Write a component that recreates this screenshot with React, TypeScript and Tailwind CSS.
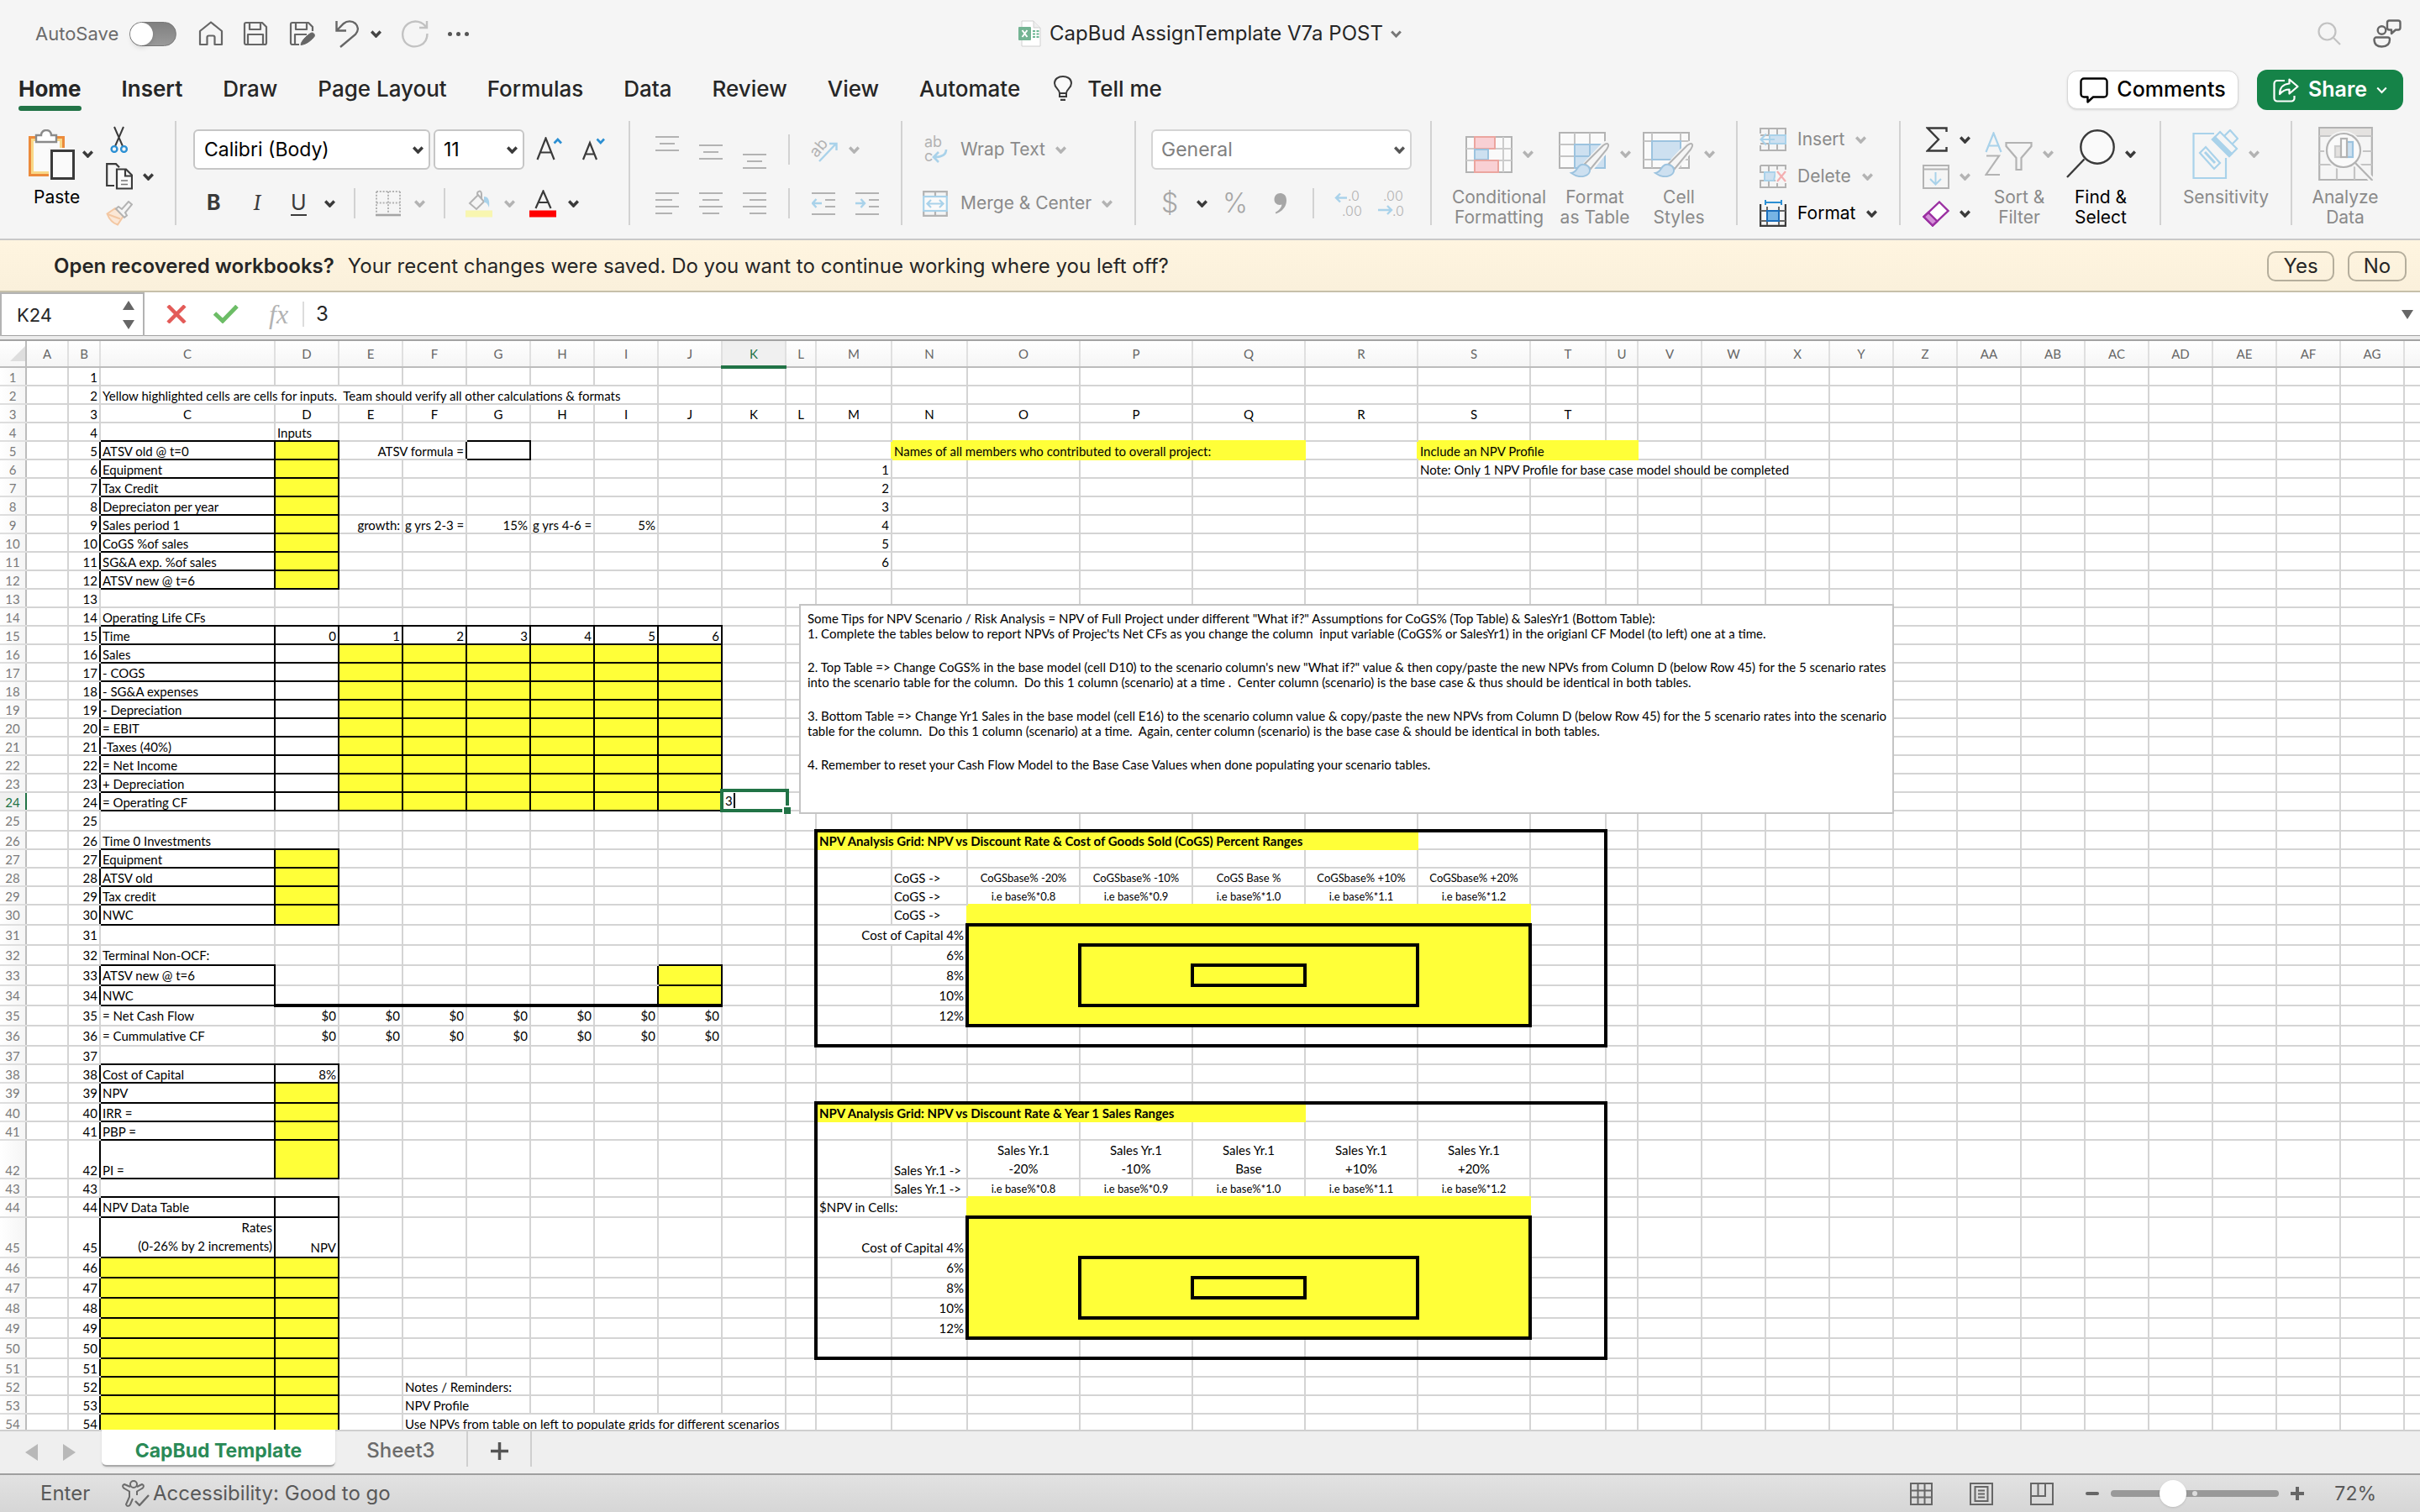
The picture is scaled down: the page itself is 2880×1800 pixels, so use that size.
import React, { useState } from "react";

const DARK = "#3a3a3a";
const DIM = "#b3b3b3";
const BLUE = "#a9d2ea";

// ---------- small icons ----------

const Chevron = ({ color = DARK, w = 3.5 }: { color?: string; w?: number }) => (
  <svg width="13" height="9" viewBox="0 0 13 9" fill="none" stroke={color} strokeWidth={w} className="shrink-0">
    <path d="M1.2 1.5 6.5 7l5.3-5.5" />
  </svg>
);

const HomeIcon = () => (
  <svg width="30" height="30" viewBox="0 0 30 30" fill="none" stroke="#666" strokeWidth="2.2" strokeLinejoin="round">
    <path d="M2 12 15 1.5 28 12v16h-8.500V19.500a2 2 0 0 0-2-2h-5a2 2 0 0 0-2 2V28H2z" />
  </svg>
);

const SaveIcon = ({ pen }: { pen?: boolean }) => (
  <svg width="32" height="30" viewBox="0 0 32 30" fill="none" stroke="#666" strokeWidth="2.2" strokeLinejoin="round">
    <path d={pen ? "M12 28H4a2 2 0 0 1-2-2V4a2 2 0 0 1 2-2h19l5 5v5" : "M2 4a2 2 0 0 1 2-2h19l5 5v19a2 2 0 0 1-2 2H4a2 2 0 0 1-2-2z"} />
    <path d={pen ? "M8 2v8h13V2M7 28V16h14" : "M8 2v8h13V2M6 28V16h18v12"} />
    {pen && <path d="M14 28.500c0-5 10-14 13-14.500 3 0 4 3 3 4.500-2 3-9 9.500-16 10z" fill="#666" strokeWidth="1" />}
  </svg>
);

const UndoIcon = () => (
  <svg width="28" height="33" viewBox="0 0 28 33" fill="none" stroke="#666" strokeWidth="2.4">
    <path d="M1.500 1v11.500H13M2 12 10 4c4-3.500 10-3.500 14 0 4 4 3.500 9 0 13L6 32" />
  </svg>
);

const RedoIcon = () => (
  <svg width="33" height="33" viewBox="0 0 33 33" fill="none" stroke="#c2c2c2" strokeWidth="2.4">
    <path d="M31 1v8H22M30.500 9C26 1 16-.5 9 4S.5 18 4 24.500 16 33 23 30s8.500-9 8.500-14" />
  </svg>
);

const BookIcon = () => (
  <svg width="28" height="32" viewBox="0 0 28 32">
    <path d="M4 1h14l8 8v22H4z" fill="#fff" stroke="#d0d0d0" />
    <path d="M18 1v8h8" fill="#eee" stroke="#d0d0d0" />
    <path d="M17 12h3v2h-3zm4.500 0h3v2h-3zM17 15.500h3v2h-3zm4.500 0h3v2h-3zM17 19h3v2h-3zm4.500 0h3v2h-3z" fill="#6cb592" />
    <rect x="0" y="8" width="15" height="16" rx="1" fill="#74b493" />
    <path d="m4.500 12 6 8m0-8-6 8" stroke="#fff" strokeWidth="2" />
  </svg>
);

const SearchIcon = () => (
  <svg width="28" height="28" viewBox="0 0 28 28" fill="none" stroke="#c2c2c2" strokeWidth="2.200">
    <circle cx="11.500" cy="11.500" r="10" />
    <path d="m19 19 8 8" />
  </svg>
);

const PeopleIcon = () => (
  <svg width="34" height="34" viewBox="0 0 34 34" fill="none" stroke="#666" strokeWidth="2.400" strokeLinejoin="round">
    <path d="M19 1.500h11a2.500 2.500 0 0 1 2.500 2.500v6a2.500 2.500 0 0 1-2.500 2.500h-3L22 17v-4.500h-3A2.500 2.500 0 0 1 17 10V4a2.500 2.500 0 0 1 2-2.500z" />
    <circle cx="10.500" cy="13" r="4.800" />
    <path d="M4 21.500h13.500A2.500 2.500 0 0 1 20 24c0 6-4 8.500-9.500 8.500S1.500 30 1.500 24A2.500 2.500 0 0 1 4 21.500z" />
  </svg>
);

const BulbIcon = () => (
  <svg width="22" height="30" viewBox="0 0 22 30" fill="none" stroke={DARK} strokeWidth="2">
    <path d="M7 21c0-5-6-6-6-12C1 4 5.500 1 11 1s10 3 10 8c0 6-6 7-6 12z" fill="#fafafa" />
    <path d="M7 21v4h8v-4" />
    <path d="M8 29h6" strokeWidth="2.500" />
  </svg>
);

const CommentIcon = () => (
  <svg width="34" height="31" viewBox="0 0 34 31" fill="none" stroke="#000" strokeWidth="2.400" strokeLinejoin="round">
    <path d="M5 1.500h24a3.500 3.500 0 0 1 3.500 3.500v15a3.500 3.500 0 0 1-3.500 3.500H16L9.500 29.500v-6H5A3.500 3.500 0 0 1 1.500 20V5A3.500 3.500 0 0 1 5 1.500z" />
  </svg>
);

const ShareIcon = () => (
  <svg width="31" height="29" viewBox="0 0 31 29" fill="none" stroke="#fff" strokeWidth="2.200" strokeLinejoin="round">
    <path d="M14 3H5a3.500 3.500 0 0 0-3.500 3.500V24A3.500 3.500 0 0 0 5 27.500h17a3.500 3.500 0 0 0 3.500-3.500v-3" />
    <path d="M19.500 1.500 29.500 10l-10 8.500v-5C14 13.500 11 15.500 8 19c0-7 4-12 11.500-12.500z" />
  </svg>
);

const PasteIcon = () => (
  <svg width="56" height="60" viewBox="0 0 56 60" fill="none">
    <rect x="1.500" y="9.500" width="40" height="45" fill="#f8d888" stroke="#ec8b3c" strokeWidth="3" />
    <rect x="6" y="14" width="31" height="36" fill="#fafafa" />
    <path d="M9 15V7h6c0-8 12-8 12 0h6v8z" fill="#fff" stroke="#8a8a8a" strokeWidth="2.400" />
    <rect x="24" y="22" width="32" height="38" fill="#f5f5f5" />
    <rect x="27.500" y="25.500" width="26" height="33" fill="#fafafa" stroke={DARK} strokeWidth="3" />
  </svg>
);

const CutIcon = () => (
  <svg width="22" height="32" viewBox="0 0 22 32" fill="none" strokeWidth="2">
    <path d="M5 1l10 23M16 1 6 24" stroke={DARK} />
    <circle cx="5" cy="27.500" r="3.400" stroke="#2b8fd3" strokeWidth="2.400" />
    <circle cx="16.500" cy="27.500" r="3.400" stroke="#2b8fd3" strokeWidth="2.400" />
  </svg>
);

const CopyIcon = () => (
  <svg width="32" height="32" viewBox="0 0 32 32" fill="none" stroke={DARK} strokeWidth="2.200">
    <path d="M10 27H1.200V1.200H12l4 4" />
    <path d="M13 7.500h11l7 7v16H13z" fill="#fafafa" />
    <path d="M23 8v7.500h8" />
    <path d="M18 21h8M18 25.500h8" strokeWidth="1.600" stroke="#777" />
  </svg>
);

const BrushIcon = () => (
  <svg width="32" height="30" viewBox="0 0 32 30" fill="none" strokeWidth="2">
    <path d="M1.500 15.500 11 9l10 9-7 10.500C9 27 4 22 1.500 15.500z" stroke="#f3c7a2" fill="#fbe7d6" />
    <path d="m2 16 15 5.500" stroke="#f3c7a2" />
    <path d="M12 9.500 15 7l4 3 8-9 4 3.500-8 9.500 2 3.500-3 2.500z" stroke={DIM} fill="#f5f5f5" />
  </svg>
);

const GrowA = ({ up }: { up?: boolean }) => (
  <svg width="32" height="30" viewBox="0 0 32 30" fill="none">
    {up ? (
      <g>
        <path d="M1.500 27 11.500 1.500 21.500 27M5 18.500h13" stroke={DARK} strokeWidth="2.200" />
        <path d="m21.500 7.500 4.300-4.500L30 7.500" stroke="#2b8fd3" strokeWidth="2.600" />
      </g>
    ) : (
      <g>
        <path d="M2 27 10 7l8 20M5 20.500h10" stroke={DARK} strokeWidth="2.200" />
        <path d="M18.500 2.500 22.800 7 27 2.500" stroke="#2b8fd3" strokeWidth="2.600" />
      </g>
    )}
  </svg>
);

const BordersIcon = () => (
  <svg width="30" height="31" viewBox="0 0 30 31" fill="none" stroke={DIM} strokeWidth="2">
    <path d="M1 1h28M1 14.500h28M1 1v25M15 1v25M29 1v25" strokeDasharray="2 1.800" />
    <path d="M0 29h30" strokeWidth="2.600" stroke="#a5a5a5" />
  </svg>
);

const FillIcon = () => (
  <svg width="32" height="33" viewBox="0 0 32 33" fill="none">
    <path d="m15 6-10 10 8 7 9-9-8-9c0-4 5-5 5 0v6" stroke={DIM} strokeWidth="2" />
    <path d="M22 8c5 0 7 4 6 13-2-5-3-6-6-6z" fill={BLUE} />
    <rect x="0" y="24.500" width="32" height="8" fill="#f8f6b0" />
  </svg>
);

const FontColorIcon = () => (
  <svg width="32" height="33" viewBox="0 0 32 33" fill="none">
    <path d="M7.500 22 16.500 1.500 25.500 22M10.500 15h12" stroke={DARK} strokeWidth="2.200" />
    <rect x="0" y="24.500" width="32" height="8" fill="#f00" />
  </svg>
);

const VAlignIcon = () => (
  <svg width="28" height="18" viewBox="0 0 28 18" stroke={DIM} strokeWidth="2">
    <path d="M0 1h28M5 9h18M0 17h28" />
  </svg>
);

const alignPaths = {
  left: "M0 1h28M0 9h20M0 17h28M0 25h20",
  center: "M0 1h28M4 9h20M0 17h28M4 25h20",
  right: "M0 1h28M8 9h20M0 17h28M8 25h20",
};

const HAlignIcon = ({ kind }: { kind: keyof typeof alignPaths }) => (
  <svg width="28" height="26" viewBox="0 0 28 26" stroke={DIM} strokeWidth="2">
    <path d={alignPaths[kind]} />
  </svg>
);

const IndentIcon = ({ out }: { out?: boolean }) => (
  <svg width="28" height="27" viewBox="0 0 28 27" fill="none" stroke={DIM} strokeWidth="2">
    <path d="M0 1h28M16 9h12M16 17h12M0 26h28" />
    <path d={out ? "M12 13H1M5.500 8 1 13l4.500 5" : "M0 13h11M6.500 8 11 13l-4.500 5"} stroke={BLUE} strokeWidth="2.400" />
  </svg>
);

const OrientIcon = () => (
  <svg width="34" height="32" viewBox="0 0 34 32" fill="none" className="overflow-visible">
    <text x="3" y="24" transform="rotate(-50 8 20)" fontSize="19" fontFamily="Inter" fill={DIM}>ab</text>
    <path d="M11 30 31 9M23 9h8.500v8" stroke={BLUE} strokeWidth="2.400" />
  </svg>
);

const WrapIcon = () => (
  <svg width="30" height="32" viewBox="0 0 30 32" fill="none" className="overflow-visible">
    <text x="2" y="13" fontSize="18" fontFamily="Inter" fill={DIM}>ab</text>
    <text x="2" y="30" fontSize="18" fontFamily="Inter" fill={DIM}>c</text>
    <path d="M28 16c0 6-4 9-14 9M19 19l-6 6 6 6" stroke={BLUE} strokeWidth="2.600" />
  </svg>
);

const MergeIcon = () => (
  <svg width="30" height="31" viewBox="0 0 30 31" fill="none">
    <path d="M1.200 7V1.200h27.600V7M1.200 24v5.800h27.600V24M15 1v6M15 24v6" stroke={DIM} strokeWidth="2.200" />
    <rect x="1.200" y="7" width="27.600" height="17" stroke={BLUE} strokeWidth="2.200" fill="#fafafa" />
    <path d="M6 15.500h18M10 11l-4.500 4.500L10 20M20 11l4.500 4.500L20 20" stroke={BLUE} strokeWidth="2.200" />
  </svg>
);

const DecimalIcon = ({ more }: { more?: boolean }) => (
  <svg width="32" height="32" viewBox="0 0 32 32" fill="none" className="overflow-visible">
    {more ? (
      <g>
        <text x="16" y="13" fontSize="16" fontFamily="Inter" fill={DIM}>.0</text>
        <text x="9" y="31" fontSize="16" fontFamily="Inter" fill={DIM}>.00</text>
        <path d="M15 9.500H2M7 4.500 2 9.500l5 5" stroke={BLUE} strokeWidth="2.400" />
      </g>
    ) : (
      <g>
        <text x="6" y="13" fontSize="16" fontFamily="Inter" fill={DIM}>.00</text>
        <text x="17" y="31" fontSize="16" fontFamily="Inter" fill={DIM}>.0</text>
        <path d="M0 24h16M11 19l5 5-5 5" stroke={BLUE} strokeWidth="2.400" />
      </g>
    )}
  </svg>
);

const CommaIcon = () => (
  <svg width="16" height="26" viewBox="0 0 16 26" fill="#a6a6a6">
    <path d="M7.500 1C12 1 15 4 15 9.500 15 17 10 23 2.500 25.500l-.8-1.700C6 21.500 9 18.500 9.500 14.500c-5 1.500-9-1.500-9-6C.5 4 3.500 1 7.500 1z" />
  </svg>
);

const CondIcon = () => (
  <svg width="56" height="44" viewBox="0 0 56 44" fill="none" strokeWidth="2">
    <rect x="1" y="1" width="54" height="42" fill="#fafafa" stroke={DIM} />
    <path d="M1 15h54M1 29h54M11 1v42M45 1v42" stroke="#ccc" />
    <rect x="11" y="1" width="24" height="14" fill="#f9d0d4" stroke="#eba59f" />
    <rect x="11" y="16" width="16" height="12" fill="#cde0f0" stroke="#9cc3df" />
    <rect x="11" y="29" width="28" height="14" fill="#f9d0d4" stroke="#eba59f" />
  </svg>
);

const Brush = () => (
  <g>
    <path d="M27 44 54 15c6-4 8 1 3 6L40 42z" fill="#f5f5f5" stroke="#f5f5f5" strokeWidth="6" />
    <path d="M31 38 53 16c6-4 8-1 4 5L38 44z" fill="#f5f5f5" stroke={DIM} strokeWidth="2" />
    <path d="M15 49c6-1 6-5 9-8 4-4 12-2 13 4 1 7-11 12-22 4z" fill="#cde0f0" stroke="#9cc3df" strokeWidth="2" />
  </g>
);

const TableIcon = () => (
  <svg width="61" height="54" viewBox="0 0 61 54" fill="none" strokeWidth="2">
    <path d="M1 1h54v42H1z" fill="#fafafa" stroke={DIM} />
    <path d="M1 15h54M1 29h54M19 1v42M37 1v42" stroke="#c4c4c4" />
    <path d="M19 15h36v28H19zM19 29h36M37 15v28" fill="#cde0f0" stroke="#9cc3df" />
    <Brush />
  </svg>
);

const StylesIcon = () => (
  <svg width="61" height="54" viewBox="0 0 61 54" fill="none" strokeWidth="2">
    <path d="M1 1h54v42H1z" fill="#fafafa" stroke={DIM} />
    <path d="M1 11h54M1 33h54M11 1v42M45 1v42" stroke="#c4c4c4" />
    <rect x="11" y="11" width="34" height="22" fill="#cde0f0" stroke="#9cc3df" />
    <Brush />
  </svg>
);

const InsertIcon = () => (
  <svg width="32" height="28" viewBox="0 0 32 28" fill="none" strokeWidth="2">
    <path d="M1 7V1h30v26H1v-6M1 9h30M1 19h30M11 1v8M21 1v8M11 19v8M21 19v8" stroke={DIM} />
    <rect x="12" y="9" width="19" height="10" fill="#cde0f0" stroke={BLUE} />
    <path d="M18 14H1.500M8 7.500 1.500 14 8 20.500" stroke={BLUE} strokeWidth="2.200" />
  </svg>
);

const DeleteIcon = () => (
  <svg width="32" height="28" viewBox="0 0 32 28" fill="none" strokeWidth="2">
    <path d="M1 1h30v8M1 1v8h30M31 20v7H1v-8h30M11 1v8M21 1v8M11 19v8M21 19v8" stroke={DIM} />
    <path d="M6 9h13l-2 10H6z" fill="#cde0f0" stroke={BLUE} />
    <path d="M19 6h13v16H19z" fill="#f5f5f5" stroke="none" />
    <path d="m21 8 10 12M31 8 21 20" stroke="#f4aeb0" strokeWidth="2.200" />
  </svg>
);

const FormatIcon = () => (
  <svg width="32" height="32" viewBox="0 0 32 32" fill="none" strokeWidth="2">
    <path d="M7 0v6M26 0v6M7 3h19" stroke="#2b8fd3" />
    <path d="M1 5v26h30V5" stroke={DARK} strokeWidth="2.400" />
    <path d="M1 13h30M1 25h30M9 8v22M23 8v22" stroke="#666" />
    <rect x="9" y="13" width="14" height="12" fill="#76b4e4" stroke="#1a6dbb" />
  </svg>
);

const SumIcon = () => (
  <svg width="26" height="30" viewBox="0 0 26 30" fill="none" stroke={DARK} strokeWidth="2.400">
    <path d="M24.500 6V1.500H2L15 15 2 28.500h22.500V24" />
  </svg>
);

const FillDownIcon = () => (
  <svg width="32" height="29" viewBox="0 0 32 29" fill="none" strokeWidth="2">
    <path d="M1 1h30v27H1zM1 5.500h30" stroke={DIM} />
    <path d="M15.500 9v14M9 17l6.500 6.500L22 17" stroke={BLUE} />
  </svg>
);

const EraserIcon = () => (
  <svg width="32" height="31" viewBox="0 0 32 31" fill="none" stroke="#9b30a2" strokeWidth="2.400">
    <path d="M20 1.500 30.500 12 12 29.500 1.500 19z" fill="#fff" />
    <path d="M7 14 17.500 24.500 12 29.500 1.500 19z" fill="#d48fd8" />
  </svg>
);

const SortIcon = () => (
  <svg width="57" height="54" viewBox="0 0 57 54" fill="none" strokeWidth="2.200">
    <path d="M1.500 24 10.500 1.500 19.500 24M5 16.500h11.500" stroke={BLUE} />
    <path d="M2 28.500h15L1.500 51h16.500" stroke={DIM} />
    <path d="M25.500 13h30v4L43.500 31v14h-6V31L25.500 17z" stroke={DIM} />
  </svg>
);

const FindIcon = () => (
  <svg width="58" height="59" viewBox="0 0 58 59" fill="none" stroke={DARK} strokeWidth="2.400">
    <path d="M21.500 35.500 1 57" />
    <circle cx="37" cy="21" r="19.700" fill="#fafafa" />
  </svg>
);

const SensitivityIcon = () => (
  <svg width="55" height="60" viewBox="0 0 55 60" fill="none" stroke={BLUE} strokeWidth="2.200">
    <path d="M26 5H1.500v53H40V34" />
    <g fill="#f5f5f5">
      <path d="m38 8 7-7 9 10-7 7z" />
      <path d="m24 12 9-9 20 20-9 9z" />
      <path d="m24 12 3-3 20 20-3 3z" fill={BLUE} />
      <path d="m9 28 7-7 17 19-7 7z" />
      <path d="m15 27 12 13" strokeWidth="3" />
    </g>
  </svg>
);

const AnalyzeIcon = () => (
  <svg width="65" height="65" viewBox="0 0 65 65" fill="none" strokeWidth="2.200" stroke={DIM}>
    <path d="M1.200 1.200h62.600V63H1.200z" />
    <path d="M2 2h61v8H2z" fill="#e4e2e0" stroke="none" />
    <path d="M1 11h63M1 29h63M1 45h63M22 45v18M43 45v18" stroke="#c4c4c4" />
    <circle cx="30" cy="28" r="23" fill="#f5f5f5" stroke="none" />
    <path d="M44 43 64 63.500" stroke="#f5f5f5" strokeWidth="7" />
    <circle cx="30" cy="28" r="20" fill="#fafafa" />
    <path d="M44 43 64 63.500" />
    <rect x="20" y="23" width="7" height="13" fill="#e4e2e0" stroke="#ccc" />
    <rect x="34" y="18" width="7" height="18" fill="#cde0f0" stroke="#9cc3df" />
    <rect x="27" y="14" width="7" height="22" fill="#fafafa" />
  </svg>
);

const A11yIcon = () => (
  <svg width="34" height="32" viewBox="0 0 34 32" fill="none" stroke="#6b6b6b" strokeWidth="2" strokeLinejoin="round">
    <circle cx="14" cy="5" r="4" />
    <path d="M10 8 3 5C0 6 1 9 3 10l6 3.500V20L5 29c1 3 4 2 5 0l3-7M18 8l6-3c3 1 2 4 0 5l-6 3.500V18" />
    <path d="m16 25 5 5 11-12" strokeWidth="2.400" />
  </svg>
);

// ---------- ribbon building blocks ----------

const Sep = () => <div className="h-[124px] w-[2px] shrink-0 bg-[#d2d2d2]" />;
const SmallSep = () => <div className="h-9 w-[2px] shrink-0 bg-[#d2d2d2]" />;

interface BigButtonProps {
  icon: React.ReactNode;
  lines: string[];
  width: string;
  active?: boolean;
  noMenu?: boolean;
}

const BigButton = ({ icon, lines, width, active, noMenu }: BigButtonProps) => (
  <button className={`flex shrink-0 flex-col items-center ${width} ${active ? "text-black" : "text-[#8a8a8a]"}`}>
    <span className="flex h-[79px] items-center gap-3">
      {icon}
      {!noMenu && <Chevron color={active ? DARK : DIM} />}
    </span>
    {lines.map((line) => (
      <span key={line} className="text-[21px] leading-6 whitespace-nowrap">{line}</span>
    ))}
  </button>
);

const TABS = ["Home", "Insert", "Draw", "Page Layout", "Formulas", "Data", "Review", "View", "Automate"];

const TitleBar = () => (
  <div className="grid h-20 grid-cols-3 items-center px-[22px]">
    <div className="flex items-center pl-5">
      <label className="flex items-center gap-[13px] text-[22px] text-[#6b6b6b]">
        AutoSave
        <input
          type="checkbox"
          className="h-[29px] w-14 appearance-none rounded-full border border-[#777] bg-gradient-to-b from-[#808080] to-[#9a9a9a] before:block before:size-[27px] before:rounded-full before:bg-white before:shadow-md"
        />
      </label>
      <div className="ml-[26px] flex items-center gap-[23px]">
        <button aria-label="Home"><HomeIcon /></button>
        <button aria-label="Save"><SaveIcon /></button>
        <button aria-label="Save as"><SaveIcon pen /></button>
        <button aria-label="Undo" className="flex items-center gap-[14px]"><UndoIcon /><Chevron color="#444" /></button>
        <button aria-label="Redo"><RedoIcon /></button>
        <button aria-label="More" className="flex gap-[5px]">
          <span className="size-[5px] rounded-full bg-[#555]" />
          <span className="size-[5px] rounded-full bg-[#555]" />
          <span className="size-[5px] rounded-full bg-[#555]" />
        </button>
      </div>
    </div>
    <button className="flex items-center justify-center gap-[9px] text-[24px] text-[#262626]">
      <BookIcon />
      CapBud AssignTemplate V7a POST
      <Chevron color="#777" w={3} />
    </button>
    <div className="flex items-center justify-end gap-[38px]">
      <button aria-label="Search"><SearchIcon /></button>
      <button aria-label="Share status"><PeopleIcon /></button>
    </div>
  </div>
);

const TabRow = () => (
  <div className="flex h-[54px] items-center justify-between pr-5 pl-[22px]">
    <div className="flex items-center gap-12 text-[26px] font-medium text-[#262626]">
      {TABS.map((tab) => (
        <button key={tab} className={`relative flex h-[50px] items-center pb-1 ${tab === "Home" ? "font-bold" : tab === "Insert" ? "font-semibold" : ""}`}>
          {tab}
          {tab === "Home" && <span className="absolute inset-x-0 bottom-0 h-[6px] rounded-full bg-[#217346]" />}
        </button>
      ))}
      <button className="-ml-2 flex items-center gap-[18px] pb-1">
        <BulbIcon />
        Tell me
      </button>
    </div>
    <div className="flex items-center gap-[22px] text-[25px] font-medium">
      <button className="flex h-[46px] w-[204px] items-center justify-center gap-[10px] rounded-xl border border-[#d8d8d8] bg-white text-black shadow">
        <CommentIcon />
        Comments
      </button>
      <button className="flex h-12 w-[174px] items-center justify-center gap-[11px] rounded-xl bg-[#158348] font-semibold text-white">
        <ShareIcon />
        Share
        <Chevron color="#fff" w={2} />
      </button>
    </div>
  </div>
);

const Ribbon = () => (
  <div className="flex h-[152px] border-b-2 border-[#c8c8c8] pt-[10px]">
    {/* clipboard */}
    <div className="flex w-[208px] shrink-0 pl-[34px]">
      <button className="flex w-[92px] shrink-0 flex-col text-left">
        <span className="flex h-[79px] items-center gap-2"><PasteIcon /><Chevron /></span>
        <span className="pl-[6px] text-[21px] leading-6 text-black">Paste</span>
      </button>
      <div className="grid h-[132px] grid-rows-3 items-center">
        <button aria-label="Cut" className="pl-[5px]"><CutIcon /></button>
        <button aria-label="Copy" className="flex items-center gap-3"><CopyIcon /><Chevron /></button>
        <button aria-label="Format painter"><BrushIcon /></button>
      </div>
    </div>
    <Sep />

    {/* font */}
    <div className="w-[538px] shrink-0 pt-[2px] pl-5">
      <div className="flex h-16 items-center">
        <div className="relative">
          <select aria-label="Font" className="h-12 w-[282px] appearance-none rounded-md border-2 border-[#c6c6c6] bg-white pl-[11px] text-[23px] text-black">
            <option>Calibri (Body)</option>
          </select>
          <span className="pointer-events-none absolute top-5 right-2"><Chevron /></span>
        </div>
        <div className="relative ml-1">
          <select aria-label="Font size" className="h-12 w-[108px] appearance-none rounded-md border-2 border-[#c6c6c6] bg-white pl-[10px] text-[23px] text-black">
            <option>11</option>
          </select>
          <span className="pointer-events-none absolute top-5 right-2"><Chevron /></span>
        </div>
        <button aria-label="Grow font" className="ml-[14px]"><GrowA up /></button>
        <button aria-label="Shrink font" className="ml-[22px]"><GrowA /></button>
      </div>
      <div className="flex h-16 items-center text-[25px] text-[#3a3a3a]">
        <button className="w-8 pl-4 font-bold">B</button>
        <button className="ml-9 w-4 font-serif text-[27px] italic">I</button>
        <button className="ml-8 border-b-2 border-[#3a3a3a] leading-7">U</button>
        <button aria-label="Underline options" className="ml-[21px]"><Chevron /></button>
        <span className="ml-[22px]"><SmallSep /></span>
        <button aria-label="Borders" className="ml-6 flex items-center gap-4"><BordersIcon /><Chevron color={DIM} /></button>
        <span className="ml-[22px]"><SmallSep /></span>
        <button aria-label="Fill color" className="ml-6 flex items-center gap-[14px]"><FillIcon /><Chevron color={DIM} /></button>
        <button aria-label="Font color" className="ml-[17px] flex items-center gap-[14px]"><FontColorIcon /><Chevron /></button>
      </div>
    </div>
    <Sep />

    {/* alignment */}
    <div className="w-[322px] shrink-0 pt-[2px] pl-[30px]">
      <div className="flex h-16 items-center">
        <button aria-label="Align top" className="pb-[14px]"><VAlignIcon /></button>
        <button aria-label="Align middle" className="ml-6 pt-[6px]"><VAlignIcon /></button>
        <button aria-label="Align bottom" className="ml-6 pt-7"><VAlignIcon /></button>
        <span className="ml-[26px]"><SmallSep /></span>
        <button aria-label="Orientation" className="ml-6 flex items-center gap-3"><OrientIcon /><Chevron color={DIM} /></button>
      </div>
      <div className="flex h-16 items-center">
        <button aria-label="Align left"><HAlignIcon kind="left" /></button>
        <button aria-label="Center" className="ml-6"><HAlignIcon kind="center" /></button>
        <button aria-label="Align right" className="ml-6"><HAlignIcon kind="right" /></button>
        <span className="ml-[26px]"><SmallSep /></span>
        <button aria-label="Decrease indent" className="ml-[26px]"><IndentIcon out /></button>
        <button aria-label="Increase indent" className="ml-6"><IndentIcon /></button>
      </div>
    </div>
    <Sep />

    <div className="w-[276px] shrink-0 pt-[2px] pl-6 text-[21px] text-[#8a8a8a]">
      <button className="flex h-16 items-center">
        <WrapIcon />
        <span className="mr-3 ml-[15px]">Wrap Text</span>
        <Chevron color={DIM} />
      </button>
      <button className="flex h-16 items-center">
        <MergeIcon />
        <span className="mr-3 ml-[15px] whitespace-nowrap">Merge &amp; Center</span>
        <Chevron color={DIM} />
      </button>
    </div>
    <Sep />

    {/* number */}
    <div className="w-[350px] shrink-0 pt-[2px] pl-[18px]">
      <div className="flex h-16 items-center">
        <div className="relative">
          <select aria-label="Number format" className="h-12 w-[310px] appearance-none rounded-md border-2 border-[#d4d4d4] bg-white pl-[10px] text-[23px] text-[#808080]">
            <option>General</option>
          </select>
          <span className="pointer-events-none absolute top-5 right-2"><Chevron color="#555" /></span>
        </div>
      </div>
      <div className="flex h-16 items-center text-[32px] font-light text-[#a6a6a6]">
        <button className="w-[30px] pl-3">$</button>
        <button aria-label="Currency options" className="ml-6"><Chevron /></button>
        <button className="ml-[17px] w-8">%</button>
        <button aria-label="Comma style" className="ml-[30px]"><CommaIcon /></button>
        <span className="ml-[30px]"><SmallSep /></span>
        <button aria-label="Increase decimal" className="ml-6"><DecimalIcon more /></button>
        <button aria-label="Decrease decimal" className="ml-5"><DecimalIcon /></button>
      </div>
    </div>
    <Sep />

    {/* styles */}
    <div className="flex w-[362px] shrink-0 items-start pl-[23px]">
      <BigButton icon={<CondIcon />} lines={["Conditional", "Formatting"]} width="w-[114px]" />
      <BigButton icon={<TableIcon />} lines={["Format", "as Table"]} width="w-[114px]" />
      <BigButton icon={<StylesIcon />} lines={["Cell", "Styles"]} width="w-[86px]" />
    </div>
    <Sep />

    {/* cells */}
    <div className="grid h-[132px] w-[192px] shrink-0 grid-rows-3 items-center pl-[26px] text-[21px] text-[#8a8a8a]">
      <button className="flex items-center gap-[13px]"><InsertIcon />Insert<Chevron color={DIM} /></button>
      <button className="flex items-center gap-[13px]"><DeleteIcon />Delete<Chevron color={DIM} /></button>
      <button className="flex items-center gap-[13px] text-black"><FormatIcon />Format<Chevron /></button>
    </div>
    <Sep />

    {/* editing */}
    <div className="flex w-[308px] shrink-0 items-start pl-[26px]">
      <div className="grid h-[132px] w-[72px] shrink-0 grid-rows-3 items-center">
        <button aria-label="AutoSum" className="flex items-center gap-[14px] pl-1"><SumIcon /><Chevron /></button>
        <button aria-label="Fill" className="flex items-center gap-3"><FillDownIcon /><Chevron color={DIM} /></button>
        <button aria-label="Clear" className="flex items-center gap-3"><EraserIcon /><Chevron /></button>
      </div>
      <BigButton icon={<SortIcon />} lines={["Sort &", "Filter"]} width="w-[86px]" />
      <BigButton icon={<FindIcon />} lines={["Find &", "Select"]} width="w-[108px]" active />
    </div>
    <Sep />

    <div className="flex w-[154px] shrink-0 items-start justify-center">
      <BigButton icon={<SensitivityIcon />} lines={["Sensitivity"]} width="w-[120px]" />
    </div>
    <Sep />
    <div className="flex flex-1 items-start pl-[17px]">
      <BigButton icon={<AnalyzeIcon />} lines={["Analyze", "Data"]} width="w-[92px]" noMenu />
    </div>
  </div>
);

const Banner = () => (
  <div className="flex h-[62px] shrink-0 items-center justify-between border-b-2 border-[#c6c0aa] bg-gradient-to-b from-[#fff5e0] to-[#faf0db] pt-[2px] pr-4 pl-16 text-[24px] text-[#262626]">
    <p>
      <span className="mr-4 font-semibold">Open recovered workbooks?</span>
      Your recent changes were saved. Do you want to continue working where you left off?
    </p>
    <div className="flex gap-4">
      <button className="flex h-9 w-20 items-center justify-center rounded-[10px] border-2 border-[#b5ae9c]">Yes</button>
      <button className="flex h-9 w-[70px] items-center justify-center rounded-[10px] border-2 border-[#b5ae9c]">No</button>
    </div>
  </div>
);

const FormulaBar = ({ value, onChange }: { value: string; onChange: (v: string) => void }) => (
  <div className="flex h-[58px] shrink-0 items-center border-b-2 border-[#a3a3a3] bg-white pb-1 text-[24px] text-[#262626] shadow-[inset_0_-4px_0_#ececec,inset_0_-5px_0_#a3a3a3]">
    <div className="flex h-full items-center border-t-2 border-r-2 border-l-2 border-[#b3b3b3]">
      <input aria-label="Name box" defaultValue="K24" className="w-[144px] pl-[18px] text-[22px] outline-none" />
      <svg width="14" height="34" viewBox="0 0 14 34" fill="#666" className="mr-[10px]">
        <path d="M7 0l7 11H0zM7 34l7-11H0z" />
      </svg>
    </div>
    <button aria-label="Cancel" className="ml-[26px]">
      <svg width="24" height="22" viewBox="0 0 24 22" stroke="#e35b58" strokeWidth="4.500"><path d="m2 1 20 20M22 1 2 21" /></svg>
    </button>
    <button aria-label="Enter" className="ml-8">
      <svg width="30" height="22" viewBox="0 0 30 22" fill="none" stroke="#6cbd66" strokeWidth="5"><path d="M1.500 10 11 19 28 1.500" /></svg>
    </button>
    <span className="ml-9 w-[26px] font-['Liberation_Serif'] text-[32px] leading-8 text-[#b3b3b3] italic">fx</span>
    <span className="ml-[14px] h-[30px] w-[2px] bg-[#dcdcdc]" />
    <input aria-label="Formula" value={value} onChange={(e) => onChange(e.target.value)} className="ml-[14px] flex-1 outline-none" />
    <svg width="14" height="11" viewBox="0 0 14 11" fill="#666" className="mr-2"><path d="M0 0h14L7 11z" /></svg>
  </div>
);

// ---------- sheet data ----------

const COLS = "A B C D E F G H I J K L M N O P Q R S T U V W X Y Z AA AB AC AD AE AF AG".split(" ");

const colWidth = (col: string) => {
  switch (col) {
    case "A":
      return "w-[50px]";
    case "B":
    case "U":
      return "w-[38px]";
    case "C":
      return "w-[208px]";
    case "L":
      return "w-[36px]";
    case "M":
    case "N":
    case "T":
      return "w-[90px]";
    case "O":
    case "P":
    case "Q":
    case "R":
    case "S":
      return "w-[134px]";
    default:
      return "w-[76px]";
  }
};

const ROWS = Array.from({ length: 54 }, (_, i) => i + 1);
const TALLER = [25, 30, 31, 32, 33, 34, 35, 36, 39, 44, 46, 47, 48, 49, 50];

const rowHeight = (row: number) => {
  if (row === 42) return "h-[46px]";
  if (row === 45) return "h-[48px]";
  return TALLER.includes(row) ? "h-[24px]" : "h-[22px]";
};

// the taller rows keep a little air under the text
const rowPad = (row: number) => (row === 45 || TALLER.includes(row) ? "pb-[2px]" : "pb-0");

interface Cell {
  text: string;
  align?: "left" | "right" | "center";
  bold?: boolean;
  small?: boolean;
}

const cells: Record<string, Cell> = {
  C2: { text: "Yellow highlighted cells are cells for inputs.  Team should verify all other calculations & formats" },
  D4: { text: "Inputs" },
  C5: { text: "ATSV old @ t=0" },
  F5: { text: "ATSV formula =", align: "right" },
  N5: { text: "Names of all members who contributed to overall project:" },
  S5: { text: "Include an NPV Profile" },
  C6: { text: "Equipment" },
  S6: { text: "Note: Only 1 NPV Profile for base case model should be completed" },
  C7: { text: "Tax Credit" },
  C8: { text: "Depreciaton per year" },
  C9: { text: "Sales period 1" },
  E9: { text: "growth:", align: "right" },
  F9: { text: "g yrs 2-3 =" },
  G9: { text: "15%", align: "right" },
  H9: { text: "g yrs 4-6 =" },
  I9: { text: "5%", align: "right" },
  C10: { text: "CoGS %of sales" },
  C11: { text: "SG&A exp. %of sales" },
  C12: { text: "ATSV new @ t=6" },
  C14: { text: "Operating Life CFs" },
  C15: { text: "Time" },
  C16: { text: "Sales" },
  C17: { text: "- COGS" },
  C18: { text: "- SG&A expenses" },
  C19: { text: "- Depreciation" },
  C20: { text: "= EBIT" },
  C21: { text: "-Taxes (40%)" },
  C22: { text: "= Net Income" },
  C23: { text: "+ Depreciation" },
  C24: { text: "= Operating CF" },
  C26: { text: "Time 0 Investments" },
  M26: { text: "NPV Analysis Grid: NPV vs Discount Rate & Cost of Goods Sold (CoGS) Percent Ranges", bold: true },
  C27: { text: "Equipment" },
  C28: { text: "ATSV old" },
  N28: { text: "CoGS ->" },
  O28: { text: "CoGSbase% -20%", align: "center", small: true },
  P28: { text: "CoGSbase% -10%", align: "center", small: true },
  Q28: { text: "CoGS Base %", align: "center", small: true },
  R28: { text: "CoGSbase% +10%", align: "center", small: true },
  S28: { text: "CoGSbase% +20%", align: "center", small: true },
  C29: { text: "Tax credit" },
  N29: { text: "CoGS ->" },
  C30: { text: "NWC" },
  N30: { text: "CoGS ->" },
  N31: { text: "Cost of Capital 4%", align: "right" },
  C32: { text: "Terminal Non-OCF:" },
  C33: { text: "ATSV new @ t=6" },
  C34: { text: "NWC" },
  C35: { text: "= Net Cash Flow" },
  C36: { text: "= Cummulative CF" },
  C38: { text: "Cost of Capital" },
  D38: { text: "8%", align: "right" },
  C39: { text: "NPV" },
  C40: { text: "IRR =" },
  M40: { text: "NPV Analysis Grid: NPV vs Discount Rate & Year 1 Sales Ranges", bold: true },
  C41: { text: "PBP =" },
  C42: { text: "PI =" },
  N42: { text: "Sales Yr.1 ->" },
  O42: { text: "Sales Yr.1\n-20%", align: "center" },
  P42: { text: "Sales Yr.1\n-10%", align: "center" },
  Q42: { text: "Sales Yr.1\nBase", align: "center" },
  R42: { text: "Sales Yr.1\n+10%", align: "center" },
  S42: { text: "Sales Yr.1\n+20%", align: "center" },
  N43: { text: "Sales Yr.1 ->" },
  C44: { text: "NPV Data Table" },
  M44: { text: "$NPV in Cells:" },
  C45: { text: "Rates\n(0-26% by 2 increments)", align: "right" },
  D45: { text: "NPV", align: "right" },
  N45: { text: "Cost of Capital 4%", align: "right" },
  F52: { text: "Notes / Reminders:" },
  F53: { text: "NPV Profile" },
  F54: { text: "Use NPVs from table on left to populate grids for different scenarios" },
};

ROWS.forEach((row) => {
  cells["B" + row] = { text: String(row), align: "right" };
});
COLS.slice(2, 20).forEach((col) => {
  cells[col + 3] = { text: col, align: "center" };
});
[1, 2, 3, 4, 5, 6].forEach((n) => {
  cells["M" + (n + 5)] = { text: String(n), align: "right" };
});
COLS.slice(3, 10).forEach((col, i) => {
  cells[col + 15] = { text: String(i), align: "right" };
  cells[col + 35] = { text: "$0", align: "right" };
  cells[col + 36] = { text: "$0", align: "right" };
});
["O", "P", "Q", "R", "S"].forEach((col, i) => {
  const text = "i.e base%*" + ["0.8", "0.9", "1.0", "1.1", "1.2"][i];
  cells[col + 29] = { text, align: "center", small: true };
  cells[col + 43] = { text, align: "center", small: true };
});
["6%", "8%", "10%", "12%"].forEach((text, i) => {
  cells["N" + (32 + i)] = { text, align: "right" };
  cells["N" + (46 + i)] = { text, align: "right" };
});

// ---------- fills and borders ----------

type Edge = "grid" | "none" | "fill" | "thin" | "thick";

const rightEdge: Record<string, Edge> = {};
const bottomEdge: Record<string, Edge> = {};
const filled: Record<string, boolean> = {};

const key = (c: number, r: number) => (COLS[c] ?? "") + r;

const eachCell = (range: string, fn: (c: number, r: number, edges: { l: boolean; t: boolean; rt: boolean; b: boolean }) => void) => {
  const [, c1, r1, c2, r2] = range.match(/([A-Z]+)(\d+):([A-Z]+)(\d+)/)!;
  const [x1, x2, y1, y2] = [COLS.indexOf(c1), COLS.indexOf(c2), Number(r1), Number(r2)];
  for (let c = x1; c <= x2; c++) {
    for (let r = y1; r <= y2; r++) {
      fn(c, r, { l: c === x1, t: r === y1, rt: c === x2, b: r === y2 });
    }
  }
};

const setAll = (range: string, edge: Edge) =>
  eachCell(range, (c, r) => {
    rightEdge[key(c, r)] = edge;
    rightEdge[key(c - 1, r)] = edge;
    bottomEdge[key(c, r)] = edge;
    bottomEdge[key(c, r - 1)] = edge;
  });

const outline = (range: string, edge: Edge) =>
  eachCell(range, (c, r, e) => {
    if (e.l) rightEdge[key(c - 1, r)] = edge;
    if (e.rt) rightEdge[key(c, r)] = edge;
    if (e.t) bottomEdge[key(c, r - 1)] = edge;
    if (e.b) bottomEdge[key(c, r)] = edge;
  });

// text that runs over its neighbours hides the lines between them
["C2:H2", "E5:E5", "S6:W6", "M31:M31", "M44:M44", "M45:M45", "F52:F52", "F53:F53", "F54:J54"].forEach((range) =>
  eachCell(range, (c, r) => {
    rightEdge[key(c, r)] = "none";
  })
);

[
  "D5:D12", "N5:Q5", "S5:U5", "E16:J24", "D27:D30", "J33:J34", "D39:D42", "C46:D54",
  "M26:R26", "O30:S35", "M40:Q40", "O44:S49",
].forEach((range) => {
  eachCell(range, (c, r) => {
    filled[key(c, r)] = true;
  });
  setAll(range, "fill");
});

["C5:D12", "G5:G5", "C15:J24", "C27:D30", "C33:C34", "J33:J34", "C38:D42", "C44:D54"].forEach((range) => setAll(range, "thin"));

["M26:T36", "O31:S35", "P32:R34", "Q33:Q33", "M40:T50", "O45:S49", "P46:R48", "Q47:Q47"].forEach((range) => outline(range, "thick"));

eachCell("D34:J34", (c, r) => {
  bottomEdge[key(c, r)] = "thick";
});

const rightClass: Record<Edge, string> = {
  grid: "border-r-2 border-r-[#d4d4d4]",
  none: "border-r-0",
  fill: "border-r-2 border-r-[#ffff38]",
  thin: "border-r-2 border-r-black",
  thick: "border-r-4 border-r-black",
};

const bottomClass: Record<Edge, string> = {
  grid: "border-b-2 border-b-[#d4d4d4]",
  none: "border-b-0",
  fill: "border-b-2 border-b-[#ffff38]",
  thin: "border-b-2 border-b-black",
  thick: "border-b-4 border-b-black",
};

const alignClass = {
  left: "justify-start pl-[2px] text-left",
  right: "justify-end pr-[2px] text-right",
  center: "justify-center text-center",
};

const Sheet = ({ value, onChange }: { value: string; onChange: (v: string) => void }) => (
  <div className="relative min-h-0 flex-1 overflow-hidden bg-white font-[Lato,sans-serif] text-[15px] leading-[18px] text-black">
    <table className="w-full table-fixed border-collapse">
      <colgroup>
        <col className="w-[31px]" />
        {COLS.map((col) => (
          <col key={col} className={colWidth(col)} />
        ))}
        <col />
      </colgroup>
      <thead>
        <tr className="h-[31px] bg-gradient-to-b from-white to-[#f5f5f5] text-[#666]">
          <th className="border-r-2 border-b-2 border-[#bcbcbc] p-0">
            <svg width="18" height="18" viewBox="0 0 18 18" className="ml-auto"><path d="M18 0v18H0z" fill="#dedede" /></svg>
          </th>
          {COLS.map((col) => (
            <th
              key={col}
              className={`border-r-2 border-r-[#e0e0e0] p-0 font-normal ${col === "K" ? "border-b-4 border-b-[#217346] bg-[#f0f0f0] text-[#217346]" : "border-b-2 border-b-[#bcbcbc]"}`}
            >
              {col}
            </th>
          ))}
          <th className="border-b-2 border-b-[#bcbcbc] p-0" />
        </tr>
      </thead>
      <tbody>
        {ROWS.map((row) => (
          <tr key={row} className={rowHeight(row)}>
            <th
              className={`border-r-2 border-b-2 border-b-[#dedede] px-0 pt-0 align-bottom font-normal ${rowPad(row)} ${row === 24 ? "border-r-[#217346] bg-[#f0f0f0] text-[#217346]" : "border-r-[#bcbcbc] bg-gradient-to-r from-white to-[#f5f5f5] text-[#7a7a7a]"}`}
            >
              {row}
            </th>
            {COLS.map((col) => {
              const id = col + row;
              const cell = cells[id];
              return (
                <td
                  key={id}
                  className={`px-0 pt-0 align-bottom ${rowPad(row)} ${rightClass[rightEdge[id] ?? "grid"]} ${bottomClass[bottomEdge[id] ?? "grid"]} ${filled[id] ? "bg-[#ffff38]" : ""}`}
                >
                  {cell && (
                    <div
                      className={`flex whitespace-pre ${alignClass[cell.align ?? "left"]} ${cell.bold ? "font-bold" : ""} ${cell.small ? "text-[13px]" : ""} ${cell.text.includes("\n") ? "leading-[22px]" : ""}`}
                    >
                      {cell.text}
                    </div>
                  )}
                  {id === "K24" && (
                    <div className="relative">
                      <div className="absolute -bottom-[3px] -left-[3px] flex h-[28px] w-[82px] items-center border-4 border-[#217346] bg-white pl-[2px]">
                        <input aria-label="K24" value={value} onChange={(e) => onChange(e.target.value)} className="w-[10px] outline-none" />
                        <span className="h-[18px] w-[2px] bg-black" />
                        <span className="absolute -right-[6px] -bottom-[6px] size-[10px] border-t-2 border-l-2 border-white bg-[#217346]" />
                      </div>
                    </div>
                  )}
                </td>
              );
            })}
            <td className="border-b-2 border-b-[#d4d4d4] p-0" />
          </tr>
        ))}
      </tbody>
    </table>

    {/* floating text box */}
    <div className="absolute top-[313px] left-[951px] h-[250px] w-[1303px] border-2 border-[#c4c4c4] bg-white py-[6px] pl-2 whitespace-pre">
      <p>Some Tips for NPV Scenario / Risk Analysis = NPV of Full Project under different "What if?" Assumptions for CoGS% (Top Table) &amp; SalesYr1 (Bottom Table):</p>
      <p className="mb-[22px]">1. Complete the tables below to report NPVs of Projec'ts Net CFs as you change the column  input variable (CoGS% or SalesYr1) in the origianl CF Model (to left) one at a time.</p>
      <p className="mb-[22px]">
        2. Top Table =&gt; Change CoGS% in the base model (cell D10) to the scenario column's new "What if?" value &amp; then copy/paste the new NPVs from Column D (below Row 45) for the 5 scenario rates
        <br />
        {"into the scenario table for the column.  Do this 1 column (scenario) at a time .  Center column (scenario) is the base case & thus should be identical in both tables."}
      </p>
      <p className="mb-[22px]">
        3. Bottom Table =&gt; Change Yr1 Sales in the base model (cell E16) to the scenario column value &amp; copy/paste the new NPVs from Column D (below Row 45) for the 5 scenario rates into the scenario
        <br />
        {"table for the column.  Do this 1 column (scenario) at a time.  Again, center column (scenario) is the base case & should be identical in both tables."}
      </p>
      <p>4. Remember to reset your Cash Flow Model to the Base Case Values when done populating your scenario tables.</p>
    </div>
  </div>
);

const SheetTabs = () => (
  <div className="flex h-[52px] shrink-0 border-t-2 border-[#cfcfcf] bg-[#efefef] text-[24px]">
    <div className="flex w-[121px] items-start gap-[30px] pt-[15px] pl-[30px]">
      <button aria-label="Previous sheet">
        <svg width="15" height="20" viewBox="0 0 15 20" fill="#b8b8b8"><path d="M15 0v20L0 10z" /></svg>
      </button>
      <button aria-label="Next sheet">
        <svg width="15" height="20" viewBox="0 0 15 20" fill="#b8b8b8"><path d="M0 0v20l15-10z" /></svg>
      </button>
    </div>
    <button className="-mt-[2px] h-[44px] w-[278px] rounded-b-md border-b-2 border-[#aaa] bg-white pt-2 text-[23px] font-bold text-[#2a8a57] shadow">CapBud Template</button>
    <button className="h-[42px] w-[158px] border-r-2 border-[#cfcfcf] pt-1 font-medium text-[#6b6b6b]">Sheet3</button>
    <button aria-label="Add sheet" className="flex h-[42px] w-[76px] items-center justify-center border-r-2 border-[#cfcfcf] pt-1">
      <svg width="21" height="21" viewBox="0 0 21 21" stroke="#555" strokeWidth="3.500"><path d="M10.500 0v21M0 10.500h21" /></svg>
    </button>
  </div>
);

const StatusBar = () => (
  <div className="flex h-[46px] shrink-0 items-center justify-between border-t-2 border-[#9f9f9f] bg-gradient-to-b from-[#e2e2e2] to-[#d6d6d6] pr-[52px] pl-12 text-[#595959]">
    <div className="flex items-center text-[24px]">
      <span className="w-[97px]">Enter</span>
      <button className="flex items-center gap-[3px]"><A11yIcon />Accessibility: Good to go</button>
    </div>
    <div className="flex items-center text-[23px]">
      <button aria-label="Normal view">
        <svg width="27" height="27" viewBox="0 0 27 27" fill="none" stroke="#666" strokeWidth="2"><path d="M1 1h25v25H1zM1 9.500h25M1 17.500h25M9.500 1v25M17.500 1v25" /></svg>
      </button>
      <button aria-label="Page layout view" className="ml-11">
        <svg width="28" height="27" viewBox="0 0 28 27" fill="none" stroke="#666" strokeWidth="2"><path d="M1 1h26v25H1zM6.500 5h15v17h-15zM10 9.500h8M10 13.500h8M10 17.500h8" /></svg>
      </button>
      <button aria-label="Page break view" className="ml-11">
        <svg width="28" height="27" viewBox="0 0 28 27" fill="none" stroke="#666" strokeWidth="2"><path d="M1 1h26v25H1zM1 16h17V1M9.500 1v15" /></svg>
      </button>
      <button aria-label="Zoom out" className="ml-[38px] h-1 w-4 rounded bg-[#666]" />
      <div className="relative ml-[14px] flex items-center">
        <input
          type="range"
          aria-label="Zoom"
          min={0}
          max={168}
          defaultValue={58}
          className="h-2 w-[200px] appearance-none rounded-full bg-[#999] [&::-webkit-slider-thumb]:size-8 [&::-webkit-slider-thumb]:appearance-none [&::-webkit-slider-thumb]:rounded-full [&::-webkit-slider-thumb]:bg-white [&::-webkit-slider-thumb]:shadow"
        />
        <span className="pointer-events-none absolute left-[97px] size-[6px] rounded-full bg-[#ddd]" />
      </div>
      <button aria-label="Zoom in" className="ml-[14px]">
        <svg width="16" height="18" viewBox="0 0 16 18" stroke="#666" strokeWidth="4"><path d="M8 1v16M0 9h16" /></svg>
      </button>
      <span className="ml-9">72%</span>
    </div>
  </div>
);

export default function App() {
  const [value, setValue] = useState("3");

  return (
    <div className="flex h-screen flex-col overflow-hidden bg-[#f5f5f5] font-[Inter,sans-serif]">
      <header className="shrink-0">
        <TitleBar />
        <TabRow />
        <Ribbon />
      </header>
      <Banner />
      <FormulaBar value={value} onChange={setValue} />
      <Sheet value={value} onChange={setValue} />
      <SheetTabs />
      <StatusBar />
    </div>
  );
}
